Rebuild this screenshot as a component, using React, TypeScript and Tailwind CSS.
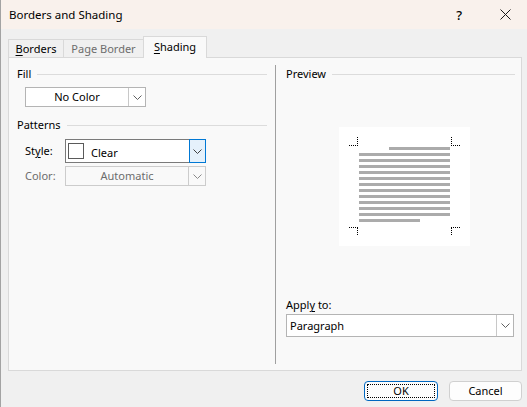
import React from "react";

function Chevron({ color = "#606060" }: { color?: string }) {
  return (
    <svg width="9" height="5" viewBox="0 0 9 5">
      <path d="M0.5 0.5 L4.5 4.5 L8.5 0.5" fill="none" stroke={color} strokeWidth="1" />
    </svg>
  );
}

function Header({ label }: { label: string }) {
  return (
    <div className="flex items-center h-[16px]">
      <span>{label}</span>
      <div className="flex-1 h-px bg-[#dcdcdc] ml-[6px]" />
    </div>
  );
}

function Preview() {
  const lines = Array.from({ length: 13 }, (_, i) => i);
  const dots = "#000";
  return (
    <div className="ml-[53px] mt-[45px] w-[131px] h-[119px] bg-white">
      <svg width="131" height="119" viewBox="0 0 131 119">
        <g stroke={dots} strokeWidth="1" strokeDasharray="1 1" fill="none">
          <line x1="10" y1="18.5" x2="19" y2="18.5" />
          <line x1="18.5" y1="10" x2="18.5" y2="18" />
          <line x1="112" y1="18.5" x2="121" y2="18.5" />
          <line x1="112.5" y1="10" x2="112.5" y2="18" />
          <line x1="10" y1="100.5" x2="19" y2="100.5" />
          <line x1="18.5" y1="101" x2="18.5" y2="109" />
          <line x1="112" y1="100.5" x2="121" y2="100.5" />
          <line x1="112.5" y1="101" x2="112.5" y2="109" />
        </g>
        {lines.map((i) => {
          const x1 = i === 0 ? 50 : 20;
          const x2 = i === 12 ? 81 : 111;
          return <rect key={i} x={x1} y={20 + i * 6} width={x2 - x1} height={3} fill="#ababab" />;
        })}
      </svg>
    </div>
  );
}

export default function App() {
  return (
    <div className="w-[527px] h-[407px] bg-[#f0f0f0] border-l border-[#a3a3a3] flex flex-col font-['Segoe_UI','Noto_Sans',sans-serif] text-[11px] text-black overflow-hidden leading-[16px]">
      {/* Title bar */}
      <div className="h-[29px] bg-[#f9f1ec] flex items-center pl-[8px] shrink-0">
        <span className="text-[11.5px]">Borders and Shading</span>
        <span className="ml-auto text-[13px] font-medium mr-[38px]">?</span>
        <svg width="11" height="11" viewBox="0 0 11 11" className="mr-[16px]">
          <path d="M0.5 0.5 L10.5 10.5 M10.5 0.5 L0.5 10.5" stroke="#1a1a1a" strokeWidth="1" />
        </svg>
      </div>

      {/* Tabs */}
      <div className="pl-[7px] pt-[7px] flex items-end h-[28px] shrink-0">
        <div className="w-[55px] h-[18px] border-l border-t border-[#d9d9d9] flex items-center justify-center">
          <span><span className="underline underline-offset-2">B</span>orders</span>
        </div>
        <div className="w-[80px] h-[18px] border-l border-t border-[#d9d9d9] flex items-center justify-center text-[#6d6d6d]">
          Page Border
        </div>
        <div className="w-[64px] h-[22px] -mb-px relative z-10 bg-[#f9f9f9] border-l border-t border-r border-[#d9d9d9] flex items-center justify-center pb-[2px]">
          <span><span className="underline underline-offset-2">S</span>hading</span>
        </div>
      </div>

      {/* Panel */}
      <div className="ml-[7px] w-[514px] h-[314px] border border-[#d9d9d9] bg-[#f9f9f9] flex shrink-0">
        {/* Left column */}
        <div className="w-[266px] pl-[8px] pr-[8px] pt-[8px] flex flex-col">
          <Header label="Fill" />
          <div className="ml-[8px] mt-[5px] w-[121px] h-[20px] border border-[#b4b4b4] bg-white flex">
            <div className="flex-1 flex items-center justify-center">No Color</div>
            <div className="w-[17px] border-l border-[#c8c8c8] flex items-center justify-center">
              <Chevron />
            </div>
          </div>

          <div className="mt-[10px]">
            <Header label="Patterns" />
          </div>

          <div className="mt-[6px] flex items-center">
            <div className="ml-[8px] w-[40px]">
              St<span className="underline underline-offset-2">y</span>le:
            </div>
            <div className="w-[141px] h-[24px] border border-[#7a7a7a] bg-white flex">
              <div className="flex-1 flex items-center pl-[2px]">
                <div className="w-[16px] h-[16px] border border-[#5a5a5a] bg-white" />
                <span className="ml-[7px] mt-[4px]">Clear</span>
              </div>
              <div className="w-[17px] -my-px -mr-px border border-[#0078d4] bg-[#e5f1fb] flex items-center justify-center">
                <Chevron color="#404040" />
              </div>
            </div>
          </div>

          <div className="mt-[3px] flex items-center text-[#6d6d6d]">
            <div className="ml-[8px] w-[40px]">Color:</div>
            <div className="w-[141px] h-[20px] border border-[#cccccc] bg-[#f9f9f9] flex">
              <div className="flex-1 flex items-center justify-center">Automatic</div>
              <div className="w-[17px] border-l border-[#cccccc] flex items-center justify-center">
                <Chevron color="#8a8a8a" />
              </div>
            </div>
          </div>
        </div>

        {/* Divider */}
        <div className="w-px bg-[#a0a0a0] mt-[7px] h-[299px]" />

        {/* Right column */}
        <div className="flex-1 pl-[10px] pr-[6px] pt-[8px] flex flex-col">
          <Header label="Preview" />
          <Preview />
          <div className="mt-[51px] h-[16px] flex items-center">
            Appl<span className="underline underline-offset-2">y</span>&nbsp;to:
          </div>
          <div className="mt-[1px] w-[228px] h-[23px] border border-[#b4b4b4] bg-white flex">
            <div className="flex-1 flex items-center pl-[3px]">Paragraph</div>
            <div className="w-[17px] border-l border-[#c8c8c8] flex items-center justify-center">
              <Chevron />
            </div>
          </div>
        </div>
      </div>

      {/* Buttons */}
      <div className="mt-[10px] flex justify-end pr-[5px] gap-[11px]">
        <div className="w-[74px] h-[20px] rounded-[4px] border border-[#0067c0] bg-[#fdfdfd] p-[2px]">
          <div className="w-full h-full border border-dotted border-black flex items-center justify-center">
            OK
          </div>
        </div>
        <div className="w-[73px] h-[20px] rounded-[4px] border border-[#d0d0d0] bg-[#fdfdfd] flex items-center justify-center">
          Cancel
        </div>
      </div>
    </div>
  );
}
